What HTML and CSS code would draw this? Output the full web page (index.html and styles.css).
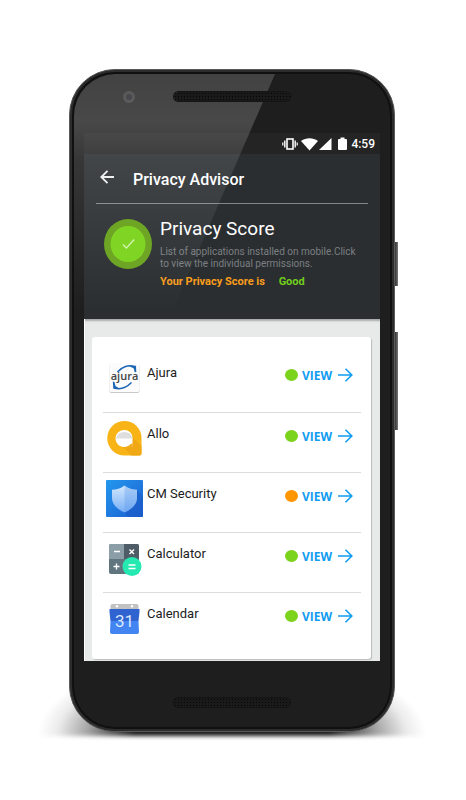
FILE: index.html
```html
<!DOCTYPE html>
<html lang="en">
<head>
    <meta charset="utf-8">
    <meta name="viewport" content="width=device-width, initial-scale=1">
    <title>Privacy Advisor</title>
    <link rel="stylesheet" href="styles.css">
</head>
<body>
    <div class="phone">
        <span class="side-key power"></span>
        <span class="side-key volume"></span>
        <div class="bezel-top">
            <span class="camera"></span>
            <span class="speaker"></span>
        </div>

        <div class="screen">
            <div class="status-bar">
                <svg width="16" height="14" viewBox="0 0 16 14" fill="none" stroke="#fff">
                    <rect x="5" y="2" width="6" height="10" stroke-width="1.6"/>
                    <path d="M2.8 3.5v7M13.2 3.5v7" stroke-width="1.4"/>
                    <path d="M.8 5.5v3M15.2 5.5v3" stroke-width="1.2"/>
                </svg>
                <svg class="wifi" width="17" height="14" viewBox="0 0 17 14" fill="#fff">
                    <path d="M0 4C5 .2 12 .2 17 4L8.500 13.500z"/>
                </svg>
                <svg class="signal" width="13" height="14" viewBox="0 0 13 14" fill="#fff">
                    <path d="M12.500 1v12H0z"/>
                </svg>
                <svg class="battery" width="9" height="14" viewBox="0 0 9 14" fill="#fff">
                    <path d="M2.500 .5h4V2H8a1 1 0 0 1 1 1v9a1 1 0 0 1-1 1H1a1 1 0 0 1-1-1V3a1 1 0 0 1 1-1h1.500z"/>
                </svg>
                <span class="time">4:59</span>
            </div>

            <header class="header">
                <div class="title-bar">
                    <button class="back" type="button" aria-label="Back">
                        <svg width="14" height="14" viewBox="0 0 14 14" fill="none" stroke="#eee" stroke-width="1.8">
                            <path d="M14 7H1.500M7.500 .8L1.300 7l6.200 6.200"/>
                        </svg>
                    </button>
                    <h1>Privacy Advisor</h1>
                </div>
                <div class="score">
                    <svg class="badge" width="48" height="50" viewBox="0 0 48 50">
                        <ellipse cx="24" cy="25" rx="24" ry="25" fill="#6ea524"/>
                        <ellipse cx="24" cy="25" rx="17.500" ry="18" fill="#80d524"/>
                        <path d="M19 25.500l3.400 3.500 7.800-8.500" fill="none" stroke="#d5f2b4" stroke-width="1.300"/>
                    </svg>
                    <div class="score-text">
                        <h2>Privacy Score</h2>
                        <p class="about">List of applications installed on mobile.Click to view the individual permissions.</p>
                        <p class="result">Your Privacy Score is <span class="good">Good</span></p>
                    </div>
                </div>
            </header>

            <main class="content">
                <ul class="apps">
                    <li class="app">
                        <svg class="icon" viewBox="0 0 37 37">
                            <rect x="3.500" y="5" width="30" height="29" rx="2" fill="#c9c9c9"/>
                            <rect x="3.500" y="4" width="30" height="29" rx="2" fill="#fcfcfc"/>
                            <path d="M11.500 13C16 7.500 23 5.500 28 7.500M25.500 23.500C21 28 14.500 31 8 29" fill="none" stroke="#1d66b5" stroke-width="1.500"/>
                            <path d="M22.500 6.800h7.500l.3 6.500-1.700-.2-.8-3.600zM6.800 22.500l1.700.4 1 4.200 3.800 2.400-6 .3z" fill="#1d66b5"/>
                            <text class="ajura" x="18.500" y="21" text-anchor="middle">ajura</text>
                        </svg>
                        <span class="name">Ajura</span>
                        <span class="dot"></span>
                        <a class="view" href="#">VIEW
                            <svg width="15" height="14" viewBox="0 0 15 14"><path d="M0 7h13.500M7.500 .7L13.800 7l-6.300 6.300"/></svg>
                        </a>
                    </li>
                    <li class="app">
                        <svg class="icon" viewBox="0 0 37 37">
                            <path d="M18.500 1a17 17 0 1 0 0 34.500H33.500a2 2 0 0 0 2-2V18A17 17 0 0 0 18.500 1z" fill="#f8b416"/>
                            <path d="M26.500 17l9 9v7.500a2 2 0 0 1-2 2h-8l-9.500-9.500z" fill="#f0a915"/>
                            <path d="M18.500 10a8.500 8.500 0 1 0 3.500 16l4.500 .5V18a8 8 0 0 0-8-8z" fill="#fff"/>
                            <path d="M10 18.500a8.500 8.500 0 0 1 16.500 0z" fill="#dedede"/>
                            <path d="M22 26l4.500-3v4z" fill="#f0a915"/>
                        </svg>
                        <span class="name">Allo</span>
                        <span class="dot"></span>
                        <a class="view" href="#">VIEW
                            <svg width="15" height="14" viewBox="0 0 15 14"><path d="M0 7h13.500M7.500 .7L13.800 7l-6.300 6.300"/></svg>
                        </a>
                    </li>
                    <li class="app">
                        <svg class="icon" viewBox="0 0 37 37">
                            <defs>
                                <linearGradient id="cm-back" x1="0" y1="0" x2="1" y2="1">
                                    <stop offset="0" stop-color="#2398ee"/>
                                    <stop offset="1" stop-color="#1c5ed0"/>
                                </linearGradient>
                                <linearGradient id="cm-shield" x1="0" y1="0" x2="0" y2="1">
                                    <stop offset="0" stop-color="#d3e8fd"/>
                                    <stop offset="1" stop-color="#76aef5"/>
                                </linearGradient>
                            </defs>
                            <rect width="37" height="37" rx="1" fill="url(#cm-back)"/>
                            <path d="M31 10l6 7v20H22l-5-6z" fill="#1a58c4" opacity=".5"/>
                            <path d="M18.500 5.500c4 3 8 4 12.500 4.300v8c0 7-6 12-12.500 14.700C12 29.800 6 24.800 6 17.800v-8c4.500-.3 8.500-1.300 12.500-4.300z" fill="url(#cm-shield)"/>
                            <path d="M18.500 5.500c4 3 8 4 12.500 4.300v8c0 7-6 12-12.500 14.700z" fill="#5c97ec" opacity=".35"/>
                        </svg>
                        <span class="name">CM Security</span>
                        <span class="dot warn"></span>
                        <a class="view" href="#">VIEW
                            <svg width="15" height="14" viewBox="0 0 15 14"><path d="M0 7h13.500M7.500 .7L13.800 7l-6.300 6.300"/></svg>
                        </a>
                    </li>
                    <li class="app">
                        <svg class="icon" viewBox="0 0 37 37">
                            <rect x="3" y="4" width="30" height="30" rx="2" fill="#61757f"/>
                            <path d="M5 4h13v15H3V6a2 2 0 0 1 2-2z" fill="#8b9ea8"/>
                            <path d="M18 4h13a2 2 0 0 1 2 2v13H18z" fill="#4d5c66"/>
                            <path d="M8 11.500h6M23.500 9.500l4.500 4.500M28 9.500l-4.500 4.500M7.500 26.500h6M10.500 23.500v6" stroke="#fff" stroke-width="1.400"/>
                            <circle cx="26" cy="26.500" r="9.500" fill="#26e9b2"/>
                            <path d="M22.500 25h7M22.500 28.500h7" stroke="#fff" stroke-width="1.500"/>
                        </svg>
                        <span class="name">Calculator</span>
                        <span class="dot"></span>
                        <a class="view" href="#">VIEW
                            <svg width="15" height="14" viewBox="0 0 15 14"><path d="M0 7h13.500M7.500 .7L13.800 7l-6.300 6.300"/></svg>
                        </a>
                    </li>
                    <li class="app">
                        <svg class="icon" viewBox="0 0 37 37">
                            <path d="M6.500 4h24a2 2 0 0 1 2 2v4h-28V6a2 2 0 0 1 2-2z" fill="#c2c2c2"/>
                            <circle cx="11" cy="6.300" r="1.200" fill="#fff"/>
                            <circle cx="26" cy="6.300" r="1.200" fill="#fff"/>
                            <path d="M3.500 9h30v3l-1 9h-28l-1-9z" fill="#2f63d0"/>
                            <path d="M4.500 21h28l.5 11a2 2 0 0 1-2 2H6a2 2 0 0 1-2-2z" fill="#4384f3"/>
                            <text class="date" x="18.500" y="27" text-anchor="middle">31</text>
                        </svg>
                        <span class="name">Calendar</span>
                        <span class="dot"></span>
                        <a class="view" href="#">VIEW
                            <svg width="15" height="14" viewBox="0 0 15 14"><path d="M0 7h13.500M7.500 .7L13.800 7l-6.300 6.300"/></svg>
                        </a>
                    </li>
                </ul>
            </main>
        </div>

        <div class="bezel-bottom">
            <span class="speaker"></span>
        </div>
        <div class="glare"></div>
    </div>
</body>
</html>
```
FILE: styles.css
```css
* {
    box-sizing: border-box;
}
body {
    margin: 0;
    padding: 69px 71px 60px 69px;
    background: #fff;
    font-family: Roboto, sans-serif;
}
h1, h2, p, ul {
    margin: 0;
    padding: 0;
}
svg {
    display: block;
    flex: none;
}

/* phone body */
.phone {
    position: relative;
    padding: 0 14px;
    border: 1px solid #5a5a5a;
    border-radius: 46px;
    background: #1e1e1e;
    box-shadow: inset 0 0 0 2px #2c2c2c, inset 0 0 0 4px #101010;
}
.phone::before {
    content: "";
    position: absolute;
    z-index: -1;
    left: -32px;
    right: -32px;
    bottom: -5px;
    height: 84px;
    background: radial-gradient(ellipse 50% 100% at 50% 100%, rgba(0, 0, 0, 0.9) 50%, rgba(0, 0, 0, 0.35) 75%, rgba(0, 0, 0, 0.08) 90%, transparent);
    filter: blur(2px);
}
.side-key {
    position: absolute;
    right: -4px;
    width: 3px;
    background: linear-gradient(to right, #333, #777);
}
.power {
    top: 172px;
    height: 44px;
}
.volume {
    top: 262px;
    height: 98px;
}
.bezel-top {
    position: relative;
    display: flex;
    justify-content: center;
    height: 63px;
    padding-top: 22px;
}
.bezel-bottom {
    display: flex;
    justify-content: center;
    height: 70px;
    padding-top: 37px;
}
.speaker {
    width: 116px;
    height: 9px;
    border-radius: 5px;
    background: radial-gradient(#050505 1px, #1a1a1a 1px) 0 0 / 3px 3px;
    box-shadow: 0 0 0 1px #141414;
}
.bezel-top .speaker {
    position: relative;
    z-index: 1;
}
.camera {
    position: absolute;
    top: 21px;
    left: 39px;
    width: 12px;
    height: 12px;
    border: 3px solid #383838;
    border-radius: 50%;
    background: #202028;
}
.glare {
    position: absolute;
    top: 4px;
    left: 4px;
    right: 119px;
    height: 240px;
    border-radius: 42px 0 0 0;
    background: linear-gradient(to bottom, rgba(255, 255, 255, 0.16), rgba(255, 255, 255, 0.19) 20%, rgba(255, 255, 255, 0.11) 36%, rgba(255, 255, 255, 0));
    clip-path: polygon(0 0, 100% 0, calc(100% - 104px) 100%, 0 100%);
    pointer-events: none;
}

/* screen */
.status-bar {
    display: flex;
    align-items: center;
    justify-content: flex-end;
    height: 21px;
    padding-right: 5px;
    background: #242424;
}
.wifi {
    margin-left: 3px;
}
.signal {
    margin-left: 1px;
}
.battery {
    margin: 0 4px 0 6px;
}
.time {
    color: #fff;
    font-size: 12px;
    font-weight: 500;
    line-height: 14px;
}
.header {
    height: 165px;
    padding: 0 12px;
    background: #2a2e31;
    color: #fff;
}
.title-bar {
    display: flex;
    align-items: center;
    height: 50px;
    padding: 2px 0 0 4px;
    border-bottom: 1px solid #83878a;
}
.back {
    margin: 0 19px 6px 0;
    padding: 0;
    border: 0;
    background: none;
}
h1 {
    font-size: 16px;
    font-weight: 500;
    line-height: 20px;
}
.score {
    display: flex;
    gap: 8px;
    padding: 15px 0 0 8px;
}
.badge {
    position: relative;
    z-index: 1;
}
h2 {
    font-size: 19px;
    font-weight: 400;
    line-height: 20px;
}
.about {
    padding: 7px 12px 0 0;
    color: #7b7f81;
    font-size: 10px;
    line-height: 12px;
}
.result {
    padding-top: 4px;
    color: #fa9d1b;
    font-size: 11px;
    font-weight: 700;
    line-height: 16px;
}
.good {
    margin-left: 11px;
    color: #72cd1b;
}
.content {
    padding: 18px 9px 2px 7px;
    border-left: 1px solid #fff;
    background: #e8eae9;
    box-shadow: inset 0 3px 2px -1px #aaa;
}

/* app list */
.apps {
    padding: 15px 10px 7px 11px;
    border-radius: 3px;
    background: #fff;
    box-shadow: 1px 1px 1px #bbb;
    list-style: none;
}
.app {
    display: flex;
    align-items: flex-start;
    height: 60px;
    padding: 7px 8px 0 3px;
}
.app + .app {
    border-top: 1px solid #dcdcdc;
}
.icon {
    width: 37px;
    height: 37px;
}
.ajura {
    fill: #444;
    font: 600 11px "Open Sans", sans-serif;
}
.date {
    fill: #dce8fd;
    font: 400 17px Roboto, sans-serif;
}
.name {
    flex: 1;
    padding-left: 4px;
    color: #1c1c1c;
    font-size: 13px;
    line-height: 28px;
}
.dot {
    width: 13px;
    height: 12px;
    margin: 10px 4px 0 0;
    border-radius: 50%;
    background: #7cd31c;
}
.dot.warn {
    background: #ff9500;
}
.view {
    display: flex;
    align-items: center;
    gap: 6px;
    height: 32px;
    color: #109cf1;
    font: 700 12px "Open Sans", sans-serif;
    text-decoration: none;
}
.view svg {
    fill: none;
    stroke: #109cf1;
    stroke-width: 1.6px;
}
```
